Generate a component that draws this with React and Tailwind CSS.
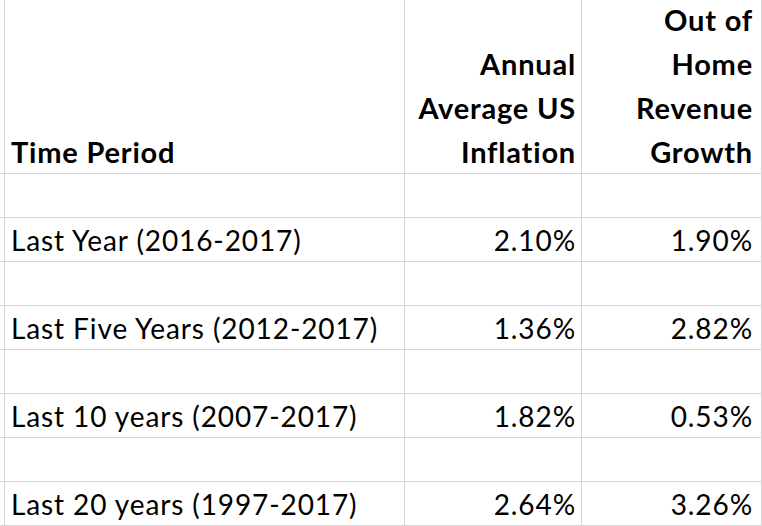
const rows = [
  ["Last Year (2016-2017)", "2.10%", "1.90%"],
  ["Last Five Years (2012-2017)", "1.36%", "2.82%"],
  ["Last 10 years (2007-2017)", "1.82%", "0.53%"],
  ["Last 20 years (1997-2017)", "2.64%", "3.26%"],
];

const cell = "border-r border-b border-[#d4d4d4] flex items-end leading-[42px]";
const head = "border-r border-b border-[#d4d4d4] flex items-end font-bold leading-[44px] text-[29px] tracking-[0.8px]";

const Blank = () => (
  <>
    <div className={cell}></div>
    <div className={cell}></div>
    <div className={cell}></div>
    <div className={cell}></div>
    <div className="border-b border-[#d4d4d4]"></div>
  </>
);

export default function App() {
  return (
    <div
      className="w-[762px] h-[526px] overflow-hidden bg-white text-black text-[28px] tracking-[0.9px]"
      style={{ fontFamily: "Lato, 'Open Sans', sans-serif" }}
    >
      <div className="grid grid-cols-[5px_400px_177px_180px_1fr] grid-rows-[174px_repeat(8,44px)]">
        {/* header */}
        <div className="border-r border-b border-[#d4d4d4]"></div>
        <div className={`${head} pl-[6px]`}>
          <span className="relative top-[1px]">Time Period</span>
        </div>
        <div className={`${head} justify-end text-right pr-[5px]`}>
          <span className="relative top-[1px]">
            Annual
            <br />
            Average US
            <br />
            Inflation
          </span>
        </div>
        <div className={`${head} justify-end text-right pr-[8px]`}>
          <span className="relative top-[1px]">
            Out of
            <br />
            Home
            <br />
            Revenue
            <br />
            Growth
          </span>
        </div>
        <div className="border-b border-[#d4d4d4]"></div>

        {rows.map(([label, infl, growth]) => (
          <div key={label} className="contents">
            <Blank />
            <div className={cell}></div>
            <div className={`${cell} pl-[6px]`}>{label}</div>
            <div className={`${cell} justify-end pr-[5px]`}>{infl}</div>
            <div className={`${cell} justify-end pr-[8px]`}>{growth}</div>
            <div className="border-b border-[#d4d4d4]"></div>
          </div>
        ))}
      </div>
    </div>
  );
}
